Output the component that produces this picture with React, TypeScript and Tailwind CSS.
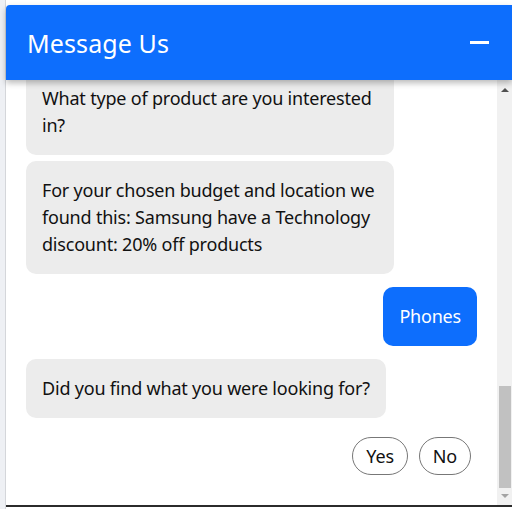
const font = { fontFamily: '"Noto Sans", "Open Sans", sans-serif' };

function BotBubble({ children, className = "" }: { children: React.ReactNode; className?: string }) {
  return (
    <div
      className={`self-start max-w-[368px] rounded-[10px] bg-[#ececec] px-4 py-4 text-[18px] leading-[27px] tracking-[-0.2px] text-[#111] ${className}`}
    >
      {children}
    </div>
  );
}

export default function App() {
  return (
    <div className="h-[509px] w-[512px] overflow-hidden bg-white" style={font}>
      <div className="flex h-full">
        {/* page behind the widget */}
        <div className="w-[6px] shrink-0 bg-[#eef0f4] border-r border-[#d4d6da]" />
        <div className="flex min-w-0 flex-1 flex-col pt-[5px] pb-[2px]">
          <div className="relative z-10 flex h-[75px] shrink-0 items-center justify-between rounded-tl-[4px] bg-[#0d6efd] pl-[21px] pr-[23px] shadow-[0_3px_6px_rgba(0,0,0,0.28)]">
            <span className="pt-[2px] text-[25px] leading-none tracking-[0.1px] text-white">Message Us</span>
            <div className="h-[3px] w-[19px] bg-white" />
          </div>
          <div className="flex min-h-0 flex-1 border-b-2 border-[#2b2b2b]">
            <div className="flex min-w-0 flex-1 flex-col justify-end gap-[6px] overflow-hidden px-5 pb-[30px]">
              <BotBubble>What type of product are you interested in?</BotBubble>
              <BotBubble>
                For your chosen budget and location we found this: Samsung have a Technology discount: 20% off
                products
              </BotBubble>
              <div className="mt-[7px] self-end rounded-[10px] bg-[#0d6efd] px-4 py-4 text-[18px] leading-[27px] tracking-[-0.2px] text-white">
                Phones
              </div>
              <BotBubble className="mt-[7px]">Did you find what you were looking for?</BotBubble>
              <div className="mt-[13px] flex justify-end gap-[11px] pr-[6px]">
                <button className="h-[38px] rounded-full border border-[#777] px-[13px] text-[18px] tracking-[-0.2px] text-[#111]">
                  Yes
                </button>
                <button className="h-[38px] rounded-full border border-[#777] px-[13px] text-[18px] tracking-[-0.2px] text-[#111]">
                  No
                </button>
              </div>
            </div>
            {/* scrollbar */}
            <div className="flex w-[15px] shrink-0 flex-col items-center bg-[#f1f1f1]">
              <div className="mt-[8px] h-0 w-0 border-x-[4px] border-b-[4px] border-x-transparent border-b-[#505050]" />
              <div className="flex-1" />
              <div className="h-[102px] w-[12px] bg-[#c1c1c1]" />
              <div className="mt-[6px] mb-[7px] h-0 w-0 border-x-[4px] border-t-[4px] border-x-transparent border-t-[#a3a3a3]" />
            </div>
          </div>
        </div>
      </div>
    </div>
  );
}
